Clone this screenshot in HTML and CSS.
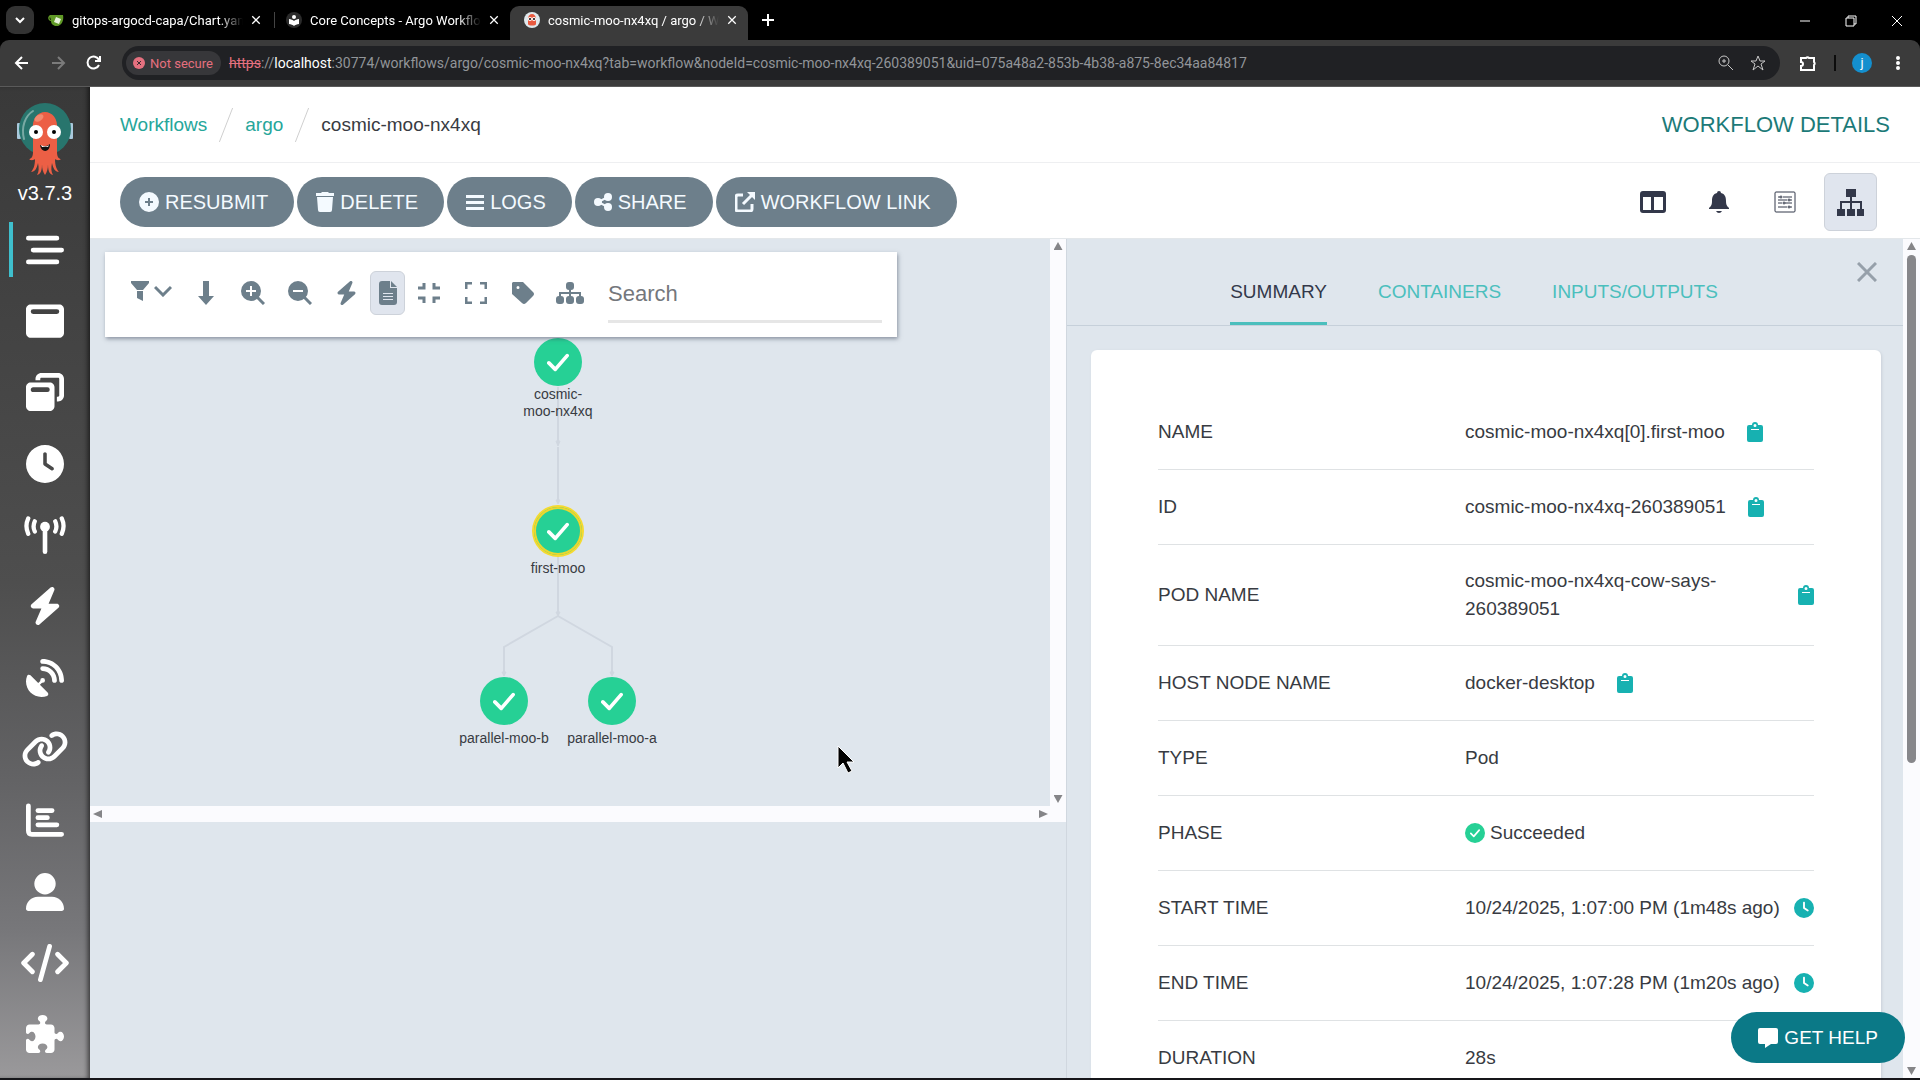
FILE: index.html
```html
<!DOCTYPE html>
<html lang="en">
<head>
  <meta charset="UTF-8" />
  <meta name="viewport" content="width=device-width, initial-scale=1.0" />
  <title>cosmic-moo-nx4xq / argo / Workflows</title>
  <link rel="stylesheet" href="styles.css">
</head>
<body>
  <!-- Shared icons -->
  <svg class="sprite" aria-hidden="true">
    <symbol id="i-x" viewBox="0 0 16 16"><path d="M2 2l12 12M14 2L2 14" fill="none" stroke="currentColor" stroke-width="2"/></symbol>
    <symbol id="i-check" viewBox="0 0 24 24"><path d="M2 13l7 7L22 5" fill="none" stroke="currentColor" stroke-width="4" stroke-linecap="round" stroke-linejoin="round"/></symbol>
    <symbol id="i-bolt" viewBox="0 0 448 512"><path d="M349.400 44.600c5.900-13.700 1.500-29.700-10.600-38.500s-28.600-8-39.900 1.800l-256 224c-10 8.800-13.600 22.900-8.900 35.300S50.700 288 64 288H175.500L98.600 467.400c-5.900 13.700-1.500 29.700 10.600 38.500s28.600 8 39.900-1.800l256-224c10-8.800 13.600-22.900 8.900-35.300s-16.600-20.700-30-20.700H272.500L349.400 44.600z"/></symbol>
    <symbol id="i-clock" viewBox="0 0 512 512"><path d="M256 0a256 256 0 1 1 0 512A256 256 0 1 1 256 0zM232 120V256c0 8 4 15.500 10.700 20l96 64c11 7.400 25.900 4.400 33.300-6.700s4.400-25.900-6.700-33.300L280 243.200V120c0-13.300-10.700-24-24-24s-24 10.700-24 24z"/></symbol>
    <symbol id="i-clip" viewBox="0 0 16 20"><path fill-rule="evenodd" d="M2 3h3a3 3 0 0 1 6 0h3a2 2 0 0 1 2 2v13a2 2 0 0 1-2 2H2a2 2 0 0 1-2-2V5a2 2 0 0 1 2-2zM8 2a1 1 0 0 0 0 3a1 1 0 0 0 0-3zM4 7v1h8V7z"/></symbol>
  </svg>

  <!-- Browser window -->
  <header class="browser">
    <div class="tabstrip">
      <button class="tab-search" aria-label="Search tabs"><svg width="10" height="10" viewBox="0 0 10 10"><path d="M1 3l4 4 4-4" fill="none" stroke="#fff" stroke-width="2"/></svg></button>
      <div class="tab">
        <svg class="favicon" viewBox="0 0 16 16"><path d="M2 3h13c1 5-1 10-5 11H7C4 13 3 11 3 9 0 9-1 5 2 3z" fill="#609926"/><path d="M2 5c-1 1 0 3 1 3z" fill="#000"/><path d="M8 5l5 2-2 5-5-2z" fill="#e8f3dc"/></svg>
        <span class="tab-title">gitops-argocd-capa/Chart.yaml</span>
        <button class="tab-close" aria-label="Close tab"><svg><use href="#i-x"/></svg></button>
      </div>
      <div class="tab divided">
        <svg class="favicon" viewBox="0 0 16 16"><circle cx="8" cy="8" r="8" fill="#2b2b2b"/><circle cx="8" cy="5" r="2" fill="#fff"/><path d="M3 7c2 0 4 1 5 2 1-1 3-2 5-2v5c-2 0-4 1-5 2-1-1-3-2-5-2z" fill="#fff"/></svg>
        <span class="tab-title">Core Concepts - Argo Workflow</span>
        <button class="tab-close" aria-label="Close tab"><svg><use href="#i-x"/></svg></button>
      </div>
      <div class="tab active">
        <svg class="favicon" viewBox="0 0 16 16"><circle cx="8" cy="8" r="8" fill="#dfe8ec"/><path d="M4 7a4 5 0 0 1 8 0v5c0 2-8 2-8 0z" fill="#e8593f"/><circle cx="6" cy="7" r="2" fill="#fff"/><circle cx="10" cy="7" r="2" fill="#fff"/><circle cx="6" cy="7" r="1" fill="#000"/><circle cx="10" cy="7" r="1" fill="#000"/></svg>
        <span class="tab-title">cosmic-moo-nx4xq / argo / Wo</span>
        <button class="tab-close" aria-label="Close tab"><svg><use href="#i-x"/></svg></button>
      </div>
      <button class="new-tab" aria-label="New tab"><svg width="12" height="12" viewBox="0 0 12 12"><path d="M6 0v12M0 6h12" stroke="#fff" stroke-width="2"/></svg></button>
      <div class="window-buttons">
        <button aria-label="Minimize"><svg viewBox="0 0 12 12"><path d="M1 6h10" stroke="#fff" fill="none"/></svg></button>
        <button aria-label="Restore"><svg viewBox="0 0 12 12"><path d="M1 3h8v8H1zM3 3V1h8v8H9" stroke="#fff" fill="none"/></svg></button>
        <button aria-label="Close"><svg viewBox="0 0 12 12"><path d="M1 1l10 10M11 1L1 11" stroke="#fff" fill="none"/></svg></button>
      </div>
    </div>

    <div class="address-row">
      <button aria-label="Back"><svg viewBox="0 0 16 16"><path d="M14 8H2M8 2L2 8l6 6"/></svg></button>
      <button class="dim" aria-label="Forward"><svg viewBox="0 0 16 16"><path d="M2 8h12M8 2l6 6-6 6"/></svg></button>
      <button aria-label="Reload"><svg viewBox="0 0 16 16"><path d="M13 10a6 6 0 1 1 0-5M14 1v5H9"/></svg></button>
      <div class="address">
        <span class="not-secure"><svg width="12" height="12" viewBox="0 0 12 12"><circle cx="6" cy="6" r="6" fill="#e5707f"/><path d="M4 4l4 4M8 4L4 8" stroke="#3a2a2d"/></svg>Not secure</span>
        <span class="url"><s>https</s>://<b>localhost</b>:30774/workflows/argo/cosmic-moo-nx4xq?tab=workflow&amp;nodeId=cosmic-moo-nx4xq-260389051&amp;uid=075a48a2-853b-4b38-a875-8ec34aa84817</span>
        <button aria-label="Zoom"><svg viewBox="0 0 16 16"><circle cx="6" cy="6" r="5"/><path d="M10 10l5 5M4 6h4M6 4v4"/></svg></button>
        <button aria-label="Bookmark"><svg viewBox="0 0 16 16"><path d="M8 1l2 5h5l-4 3 2 6-5-4-5 4 2-6-4-3h5z"/></svg></button>
      </div>
      <button aria-label="Extensions"><svg viewBox="0 0 16 16"><path d="M1 3h5a2 2 0 0 1 3 0h5v4a2 2 0 0 1 0 3v5H1v-4a2 2 0 0 0 0-4z" stroke-width="2"/></svg></button>
      <span class="bar"></span>
      <button class="avatar">j</button>
      <button class="dots" aria-label="Menu"><svg viewBox="0 0 16 16"><circle cx="8" cy="3" r="1"/><circle cx="8" cy="8" r="1"/><circle cx="8" cy="13" r="1"/></svg></button>
    </div>
  </header>

  <div class="app">
    <!-- Sidebar -->
    <aside class="sidebar">
      <svg class="logo" viewBox="0 0 56 74">
        <rect x="0" y="21" width="4" height="16" rx="1" fill="#a9c9dc"/><rect x="52" y="21" width="4" height="16" rx="1" fill="#a9c9dc"/>
        <circle cx="28" cy="27" r="26" fill="#28756d"/>
        <path d="M7 37C4 25 8 14 16 9" fill="none" stroke="#79aaa4" stroke-width="2" stroke-linecap="round"/>
        <path d="M16 28C13 4 43 4 40 28v22c0 5 2 7 4 7-2 2-5 1-6 0 0 7 2 11 4 13-4 0-6-4-7-9-1 5-1 9 1 12-4-1-5-5-5-11 0 5-1 8-3 11-2-3-3-6-3-11 0 6-1 10-5 11 2-3 2-7 1-12-1 5-3 9-7 9 2-2 4-6 4-13-1 1-4 2-6 0 2 0 4-2 4-7z" fill="#ec5f45"/>
        <ellipse cx="22" cy="16" rx="5" ry="3" fill="#f28a70" transform="rotate(-35 22 16)"/>
        <circle cx="19" cy="30" r="7" fill="#fff"/><circle cx="37" cy="30" r="7" fill="#fff"/>
        <circle cx="19" cy="30" r="2" fill="#000"/><circle cx="37" cy="30" r="2" fill="#000"/>
        <path d="M23 43q5 3 10-1c0 9-9 9-10 1z" fill="#111"/><path d="M24 43q5 3 8 0l-1 2h-6z" fill="#fff"/>
      </svg>
      <div class="version">v3.7.3</div>
      <nav>
        <a href="#" class="current" aria-label="Workflows"><svg viewBox="0 0 512 512"><path d="M32 96H416M96 256H480M32 416H416" stroke="#fff" stroke-width="64" stroke-linecap="round"/></svg></a>
        <a href="#" aria-label="Workflow Templates"><svg viewBox="0 0 512 512"><path d="M64 32C28.700 32 0 60.700 0 96V416c0 35.300 28.700 64 64 64H448c35.300 0 64-28.700 64-64V96c0-35.300-28.700-64-64-64H64zM96 96H416a32 32 0 0 1 0 64H96a32 32 0 0 1 0-64z" fill-rule="evenodd"/></svg></a>
        <a href="#" aria-label="Cluster Workflow Templates"><svg viewBox="0 0 512 512"><path fill-rule="evenodd" d="M432 64H208c-8.800 0-16 7.200-16 16V96H128V80c0-44.200 35.800-80 80-80H432c44.200 0 80 35.800 80 80V304c0 44.200-35.800 80-80 80H416V320h16c8.800 0 16-7.200 16-16V80c0-8.800-7.200-16-16-16zM0 192c0-35.300 28.700-64 64-64H320c35.300 0 64 28.700 64 64V448c0 35.300-28.700 64-64 64H64c-35.300 0-64-28.700-64-64V192zm64 32c0 17.700 14.300 32 32 32H288a32 32 0 0 0 0-64H96c-17.700 0-32 14.300-32 32z"/></svg></a>
        <a href="#" aria-label="Cron Workflows"><svg><use href="#i-clock"/></svg></a>
        <a href="#" aria-label="Event Flow"><svg class="wide" viewBox="0 0 576 512"><circle cx="288" cy="144" r="66"/><path d="M288 144V480" stroke="#fff" stroke-width="62" stroke-linecap="round"/><path d="M62 32Q14 136 62 240M150 72Q118 140 150 208M426 72Q458 140 426 208M514 32Q562 136 514 240" fill="none" stroke="#fff" stroke-width="58" stroke-linecap="round"/></svg></a>
        <a href="#" aria-label="Sensors"><svg><use href="#i-bolt"/></svg></a>
        <a href="#" aria-label="Event Sources"><svg viewBox="0 0 512 512"><path d="M192 32c0-17.700 14.300-32 32-32C383.100 0 512 128.900 512 288c0 17.700-14.300 32-32 32s-32-14.300-32-32C448 164.300 347.700 64 224 64c-17.700 0-32-14.300-32-32zM60.600 220.600L164.700 324.700l28.400-28.400c-.7-2.600-1.100-5.400-1.100-8.300a32 32 0 1 1 32 32c-2.900 0-5.600-.4-8.300-1.100l-28.400 28.400L291.400 451.400c14.500 14.500 11.800 38.800-7.300 46.300C260.500 506.900 234.900 512 208 512C93.100 512 0 418.900 0 304c0-26.900 5.100-52.500 14.400-76.100c7.500-19 31.800-21.800 46.300-7.300zM224 96c106 0 192 86 192 192c0 17.700-14.300 32-32 32s-32-14.300-32-32c0-70.700-57.300-128-128-128a32 32 0 0 1 0-64z"/></svg></a>
        <a href="#" aria-label="Links"><svg class="wide" viewBox="0 0 640 512"><path d="M579.800 267.700c56.500-56.500 56.500-148 0-204.500c-50-50-128.800-56.500-186.300-15.400l-1.600 1.100c-14.400 10.300-17.700 30.300-7.400 44.600s30.300 17.700 44.600 7.400l1.600-1.100c32.100-22.900 76-19.300 103.800 8.600c31.500 31.500 31.500 82.500 0 114L422.300 334.800c-31.500 31.500-82.500 31.500-114 0c-27.900-27.900-31.500-71.800-8.600-103.800l1.100-1.600c10.300-14.400 6.900-34.400-7.400-44.600s-34.400-6.900-44.600 7.400l-1.100 1.600C206.500 251.200 213 330 263 380c56.500 56.500 148 56.500 204.500 0L579.800 267.700zM60.200 244.300c-56.500 56.500-56.500 148 0 204.500c50 50 128.800 56.500 186.300 15.400l1.600-1.100c14.400-10.300 17.700-30.300 7.400-44.600s-30.300-17.700-44.600-7.400l-1.600 1.100c-32.100 22.900-76 19.300-103.800-8.600C74 372 74 321 105.500 289.500L217.700 177.200c31.500-31.500 82.500-31.500 114 0c27.900 27.900 31.500 71.800 8.600 103.900l-1.100 1.600c-10.300 14.400-6.900 34.400 7.400 44.600s34.400 6.900 44.600-7.400l1.100-1.600C433.500 260.800 427 182 377 132c-56.500-56.500-148-56.500-204.500 0L60.200 244.300z"/></svg></a>
        <a href="#" aria-label="Reports"><svg viewBox="0 0 512 512"><path d="M32 64V400q0 48 48 48H480M160 128H352M160 224H288M160 320H416" fill="none" stroke="#fff" stroke-width="64" stroke-linecap="round"/></svg></a>
        <a href="#" aria-label="User"><svg viewBox="0 0 512 512"><path d="M256 288A144 144 0 1 0 256 0a144 144 0 1 0 0 288zm-94.700 32C72.200 320 0 392.200 0 481.300c0 17 13.800 30.700 30.700 30.700H481.300c17 0 30.700-13.800 30.700-30.700C512 392.200 439.800 320 350.700 320H161.300z"/></svg></a>
        <a href="#" aria-label="API Docs"><svg class="wide" viewBox="0 0 640 512"><path d="M382 32L258 480M150 138L32 256l118 118M490 138l118 118-118 118" fill="none" stroke="#fff" stroke-width="64" stroke-linecap="round" stroke-linejoin="round"/></svg></a>
        <a href="#" aria-label="Plugins"><svg viewBox="0 0 512 512"><path d="M192 104.800c0-9.200-5.800-17.300-13.200-22.800C167.200 73.300 160 61.300 160 48c0-26.500 28.700-48 64-48s64 21.500 64 48c0 13.300-7.200 25.300-18.800 34c-7.400 5.500-13.200 13.600-13.200 22.800c0 12.800 10.400 23.200 23.200 23.200H336c26.500 0 48 21.500 48 48v56.800c0 12.800 10.400 23.200 23.200 23.200c9.200 0 17.300-5.800 22.800-13.200c8.700-11.600 20.700-18.800 34-18.800c26.500 0 48 28.700 48 64s-21.500 64-48 64c-13.300 0-25.300-7.200-34-18.800c-5.500-7.400-13.600-13.200-22.800-13.200c-12.800 0-23.200 10.400-23.200 23.200V464c0 26.500-21.500 48-48 48H279.200c-12.800 0-23.200-10.400-23.200-23.200c0-9.200 5.800-17.300 13.200-22.800c11.600-8.700 18.800-20.700 18.800-34c0-26.500-28.700-48-64-48s-64 21.500-64 48c0 13.300 7.200 25.300 18.800 34c7.400 5.500 13.200 13.600 13.200 22.800c0 12.800-10.400 23.200-23.200 23.200H48c-26.500 0-48-21.500-48-48V343.200C0 330.400 10.400 320 23.200 320c9.200 0 17.300 5.800 22.800 13.200C54.700 344.800 66.700 352 80 352c26.500 0 48-28.700 48-64s-21.500-64-48-64c-13.300 0-25.300 7.200-34 18.800C40.500 250.200 32.400 256 23.200 256C10.400 256 0 245.600 0 232.800V176c0-26.500 21.500-48 48-48H168.800c12.800 0 23.200-10.400 23.200-23.200z"/></svg></a>
      </nav>
    </aside>

    <main>
      <div class="topbar">
        <div class="breadcrumbs">
          <a href="#">Workflows</a>
          <svg class="slash" viewBox="0 0 16 36"><path d="M15 0L1 36"/></svg>
          <a href="#">argo</a>
          <svg class="slash" viewBox="0 0 16 36"><path d="M15 0L1 36"/></svg>
          <span>cosmic-moo-nx4xq</span>
        </div>
        <h1>WORKFLOW DETAILS</h1>
      </div>

      <div class="actions">
        <button class="pill"><svg viewBox="0 0 20 20"><path fill-rule="evenodd" d="M10 0a10 10 0 0 1 0 20a10 10 0 0 1 0-20zM9 6v3H6v2h3v3h2v-3h3V9h-3V6z"/></svg>RESUBMIT</button>
        <button class="pill"><svg class="slim" viewBox="0 0 18 20"><path d="M6 0h6l1 1h5v3H0V1h5zM1 5h16l-1 13q0 2-2 2H4q-2 0-2-2z"/></svg>DELETE</button>
        <button class="pill"><svg class="slim" viewBox="0 0 18 20"><path d="M0 3h18v3H0zM0 9h18v3H0zM0 15h18v3H0z"/></svg>LOGS</button>
        <button class="pill"><svg class="slim" viewBox="0 0 18 20"><circle cx="4" cy="10" r="4"/><circle cx="14" cy="5" r="4"/><circle cx="14" cy="15" r="4"/><path d="M14 5L4 10l10 5" fill="none" stroke="currentColor" stroke-width="2"/></svg>SHARE</button>
        <button class="pill"><svg viewBox="0 0 20 20"><path d="M8 3H3q-2 0-2 2v12q0 2 2 2h12q2 0 2-2v-5M8 12L18 2" fill="none" stroke="currentColor" stroke-width="3"/><path d="M12 0h8v8z"/></svg>WORKFLOW LINK</button>
        <div class="views">
          <button aria-label="Columns"><svg width="26" height="22" viewBox="0 0 26 22"><path fill-rule="evenodd" d="M3 0h20q3 0 3 3v16q0 3-3 3H3q-3 0-3-3V3q0-3 3-3zM3 6v13h8V6zM14 6v13h9V6z"/></svg></button>
          <button aria-label="Notifications"><svg width="20" height="22" viewBox="0 0 20 22"><path d="M10 0q2 0 2 2c4 1 5 4 5 8 0 4 1 5 3 7v1H0v-1c2-2 3-3 3-7 0-4 1-7 5-8q0-2 2-2zM7 20h6q-1 2-3 2t-3-2z"/></svg></button>
          <button aria-label="Parameters"><svg class="outline" width="22" height="22" viewBox="0 0 22 22"><rect x="1" y="1" width="20" height="20" rx="1"/><path d="M4 6h2M9 6h9M4 9h9M16 9h2M4 12h4M11 12h7M4 16h9M16 16h2"/><circle cx="7" cy="6" r="1"/><circle cx="15" cy="9" r="1"/><circle cx="10" cy="12" r="1"/><circle cx="15" cy="16" r="1"/></svg></button>
          <button class="selected" aria-label="Graph"><svg width="27" height="27" viewBox="0 0 27 27"><path d="M9 0h10v8H9zM0 20h8v7H0zM10 20h8v7h-8zM20 20h7v7h-7z"/><path d="M14 8v12M4 20v-7h20v7" fill="none" stroke="currentColor" stroke-width="2"/></svg></button>
        </div>
      </div>

      <div class="workspace">
        <section class="graph-pane">
          <div class="graph">
            <div class="canvas">
              <svg class="edges" width="960" height="567" viewBox="0 0 960 567">
                <path d="M468 148V206M468 208V264M468 316V376M468 377L414 408V436M468 377L522 408V436"/>
                <path class="heads" d="M466 202h4l-2 5zM466 261h4l-2 4zM466 373h4l-2 4zM412 433h4l-2 4zM520 433h4l-2 4z"/>
              </svg>
              <div class="node root"><span class="dot"><svg><use href="#i-check"/></svg></span><span class="label">cosmic-<br>moo-nx4xq</span></div>
              <div class="node first"><span class="dot picked"><svg><use href="#i-check"/></svg></span><span class="label">first-moo</span></div>
              <div class="node left"><span class="dot"><svg><use href="#i-check"/></svg></span><span class="label">parallel-moo-b</span></div>
              <div class="node right"><span class="dot"><svg><use href="#i-check"/></svg></span><span class="label">parallel-moo-a</span></div>

              <div class="toolbar">
                <button class="filter" aria-label="Filter"><svg width="18" height="20" viewBox="0 0 18 20"><path d="M0 0h18v2l-6 7H6L0 2zM6 10h6v10l-6-3z"/></svg><svg width="18" height="12" viewBox="0 0 18 12"><path d="M1 2l8 8 8-8" fill="none" stroke="currentColor" stroke-width="3"/></svg></button>
                <button aria-label="Layout direction"><svg width="16" height="24" viewBox="0 0 16 24"><path d="M5 0h6v15h5l-8 9-8-9h5z"/></svg></button>
                <button aria-label="Zoom in"><svg width="24" height="24" viewBox="0 0 24 24"><path d="M16 16l7 7" stroke="currentColor" stroke-width="3"/><path fill-rule="evenodd" d="M10 0a10 10 0 0 1 0 20a10 10 0 0 1 0-20zM9 5v4H5v2h4v4h2v-4h4V9h-4V5z"/></svg></button>
                <button aria-label="Zoom out"><svg width="24" height="24" viewBox="0 0 24 24"><path d="M16 16l7 7" stroke="currentColor" stroke-width="3"/><path fill-rule="evenodd" d="M10 0a10 10 0 0 1 0 20a10 10 0 0 1 0-20zM5 9v2h10V9z"/></svg></button>
                <button aria-label="Expand nodes"><svg width="21" height="24"><use href="#i-bolt"/></svg></button>
                <button class="selected" aria-label="Show artifacts"><svg width="18" height="24" viewBox="0 0 18 24"><path fill-rule="evenodd" d="M3 0h8v7h7v14q0 3-3 3H3q-3 0-3-3V3q0-3 3-3zM4 12v1h10v-1zM4 15v1h10v-1zM4 18v1h10v-1z"/><path d="M12 0l6 6h-6z"/></svg></button>
                <button aria-label="Collapse"><svg width="22" height="22" viewBox="0 0 22 22"><path d="M0 6h6V1M16 1v5h6M0 16h6v5M16 21v-5h6" fill="none" stroke="currentColor" stroke-width="3"/></svg></button>
                <button aria-label="Full graph"><svg width="22" height="22" viewBox="0 0 22 22"><path d="M1 7V1h6M15 1h6v6M1 15v6h6M15 21h6v-6" fill="none" stroke="currentColor" stroke-width="3"/></svg></button>
                <button aria-label="Labels"><svg width="22" height="22" viewBox="0 0 22 22"><path fill-rule="evenodd" d="M1 0h10l10 10q2 2 0 4l-7 7q-2 2-4 0L0 12V1zM6 4a1 1 0 0 0 0 3a1 1 0 0 0 0-3z"/></svg></button>
                <button aria-label="Node types"><svg width="28" height="22" viewBox="0 0 28 22"><rect x="10" y="0" width="8" height="8" rx="3"/><rect x="0" y="14" width="8" height="8" rx="3"/><rect x="10" y="14" width="8" height="8" rx="3"/><rect x="20" y="14" width="8" height="8" rx="3"/><path d="M14 8v6M4 14v-3h20v3" fill="none" stroke="currentColor" stroke-width="2"/></svg></button>
                <input type="text" placeholder="Search" aria-label="Search" />
              </div>
            </div>
            <div class="vbar"><i class="up"></i><i class="down"></i></div>
            <div class="hbar"><i class="prev"></i><i class="next"></i></div>
          </div>
        </section>

        <section class="details">
          <div class="details-body">
            <div class="tabs">
              <button class="on">SUMMARY</button>
              <button>CONTAINERS</button>
              <button>INPUTS/OUTPUTS</button>
              <button class="close" aria-label="Close"><svg width="20" height="20" viewBox="0 0 20 20"><path d="M1 1l18 18M19 1L1 19" stroke="currentColor" stroke-width="3"/></svg></button>
            </div>
            <div class="card">
              <table>
                <tr><th scope="row">NAME</th><td><div class="value">cosmic-moo-nx4xq[0].first-moo<button class="copy" aria-label="Copy"><svg><use href="#i-clip"/></svg></button></div></td></tr>
                <tr><th scope="row">ID</th><td><div class="value">cosmic-moo-nx4xq-260389051<button class="copy" aria-label="Copy"><svg><use href="#i-clip"/></svg></button></div></td></tr>
                <tr><th scope="row">POD NAME</th><td><div class="value spread"><span>cosmic-moo-nx4xq-cow-says-<br>260389051</span><button class="copy" aria-label="Copy"><svg><use href="#i-clip"/></svg></button></div></td></tr>
                <tr><th scope="row">HOST NODE NAME</th><td><div class="value">docker-desktop<button class="copy" aria-label="Copy"><svg><use href="#i-clip"/></svg></button></div></td></tr>
                <tr><th scope="row">TYPE</th><td>Pod</td></tr>
                <tr><th scope="row">PHASE</th><td><div class="value phase"><span class="ok"><svg><use href="#i-check"/></svg></span>Succeeded</div></td></tr>
                <tr><th scope="row">START TIME</th><td><div class="value spread"><span>10/24/2025, 1:07:00 PM (1m48s ago)</span><svg class="time"><use href="#i-clock"/></svg></div></td></tr>
                <tr><th scope="row">END TIME</th><td><div class="value spread"><span>10/24/2025, 1:07:28 PM (1m20s ago)</span><svg class="time"><use href="#i-clock"/></svg></div></td></tr>
                <tr><th scope="row">DURATION</th><td>28s</td></tr>
              </table>
            </div>
          </div>
          <div class="vbar page"><i class="up"></i><span class="thumb"></span><i class="down"></i></div>
        </section>
      </div>
    </main>
  </div>

  <button class="help"><svg width="20" height="20" viewBox="0 0 20 20"><path d="M2 0h16q2 0 2 2v12q0 2-2 2h-5l-6 4v-4H2q-2 0-2-2V2q0-2 2-2z"/></svg>GET HELP</button>
  <svg class="cursor" viewBox="0 0 18 29"><path d="M1 1v22l5-5 5 10 4-2-5-9h7z" fill="#000" stroke="#fff"/></svg>
</body>
</html>
```
FILE: styles.css
```css
* { box-sizing: border-box; }
body {
  margin: 0;
  height: 100vh;
  display: flex;
  flex-direction: column;
  overflow: hidden;
  background: #fff;
  color: #383b42;
  font-family: "Liberation Sans", Arial, sans-serif;
  font-size: 19px;
}
button {
  border: none;
  background: none;
  padding: 0;
  margin: 0;
  color: inherit;
  font: inherit;
  cursor: pointer;
}
button svg, a svg { display: block; }
svg { fill: currentColor; flex-shrink: 0; }
svg.outline { fill: none; stroke: currentColor; }
a { text-decoration: none; }
.sprite { display: none; }

/* Browser */
.browser {
  flex-shrink: 0;
  background: #000;
  color: #fff;
  font-family: Roboto, "Open Sans", sans-serif;
  font-size: 13px;
}
.tabstrip {
  display: flex;
  height: 40px;
  padding: 6px 0 0 6px;
}
.tab-search {
  width: 28px;
  height: 28px;
  border-radius: 9px;
  background: #333;
  display: flex;
  align-items: center;
  justify-content: center;
}
.tab {
  position: relative;
  width: 238px;
  display: flex;
  align-items: center;
  padding: 0 11px 6px 14px;
}
.tab.divided::before {
  content: "";
  position: absolute;
  left: 2px;
  top: 6px;
  width: 1px;
  height: 16px;
  background: #444;
}
.tab.active {
  background: #3b3b3b;
  border-radius: 9px 9px 0 0;
}
.favicon { width: 16px; height: 16px; margin-right: 8px; }
.tab-title {
  flex: 1;
  min-width: 0;
  white-space: nowrap;
  -webkit-mask-image: linear-gradient(to right, #000 86%, transparent);
  mask-image: linear-gradient(to right, #000 86%, transparent);
}
.tab-close { margin-left: 8px; }
.tab-close svg { width: 10px; height: 10px; }
.new-tab { width: 34px; padding: 0 0 6px 14px; }
.window-buttons {
  display: flex;
  margin-left: auto;
}
.window-buttons button { width: 46px; padding-bottom: 4px; }
.window-buttons svg { width: 12px; height: 12px; margin: 0 auto; }
.address-row {
  display: flex;
  align-items: center;
  height: 47px;
  padding: 0 4px;
  background: #3b3b3b;
  border-bottom: 1px solid #5a5a5a;
  border-radius: 9px 9px 0 0;
}
.address-row button { width: 36px; height: 32px; }
.address-row button svg {
  width: 16px;
  height: 16px;
  margin: 0 auto;
  fill: none;
  stroke: currentColor;
  stroke-width: 2;
}
.address-row .dim { color: #7b7b7b; }
.address {
  flex: 1;
  display: flex;
  align-items: center;
  height: 34px;
  margin: 0 10px;
  padding: 0 6px 0 4px;
  border-radius: 17px;
  background: #202124;
}
.address button { width: 32px; color: #c7c7c7; }
.address button svg { stroke-width: 1; }
.not-secure {
  display: flex;
  align-items: center;
  gap: 5px;
  height: 24px;
  padding: 0 8px 0 7px;
  border-radius: 12px;
  background: #37373a;
  color: #e5707f;
  white-space: nowrap;
}
.url {
  flex: 1;
  margin-left: 8px;
  color: #929599;
  font-size: 14px;
  white-space: nowrap;
}
.url s { color: #e5707f; }
.url b { color: #fff; font-weight: normal; }
.bar { width: 2px; height: 16px; margin: 0 8px; background: #0c0c0c; }
.address-row .avatar {
  width: 20px;
  height: 20px;
  margin: 0 8px;
  border-radius: 50%;
  background: #148fce;
  line-height: 20px;
}
.address-row .dots svg { fill: #fff; }

/* Shell */
.app {
  flex: 1;
  min-height: 0;
  display: flex;
  border-bottom: 2px solid #16161a;
}
.sidebar {
  width: 90px;
  display: flex;
  flex-direction: column;
  align-items: center;
  padding: 15px 0 8px;
  background: linear-gradient(#393939, #4e4e4e 50%, #636365 70%, #77777a 85%, #9a999b);
  box-shadow: inset -4px 0 5px -2px rgba(0,0,0,0.6);
  color: #fff;
}
.logo { width: 56px; height: 74px; }
.version {
  margin: 5px 0 9px;
  font-size: 20px;
  line-height: 24px;
}
nav {
  flex: 1;
  width: 100%;
  display: flex;
  flex-direction: column;
}
nav a {
  position: relative;
  flex: 1;
  display: flex;
  align-items: center;
  justify-content: center;
  color: #fff;
}
nav svg { width: 38px; height: 38px; }
nav svg.wide { width: 48px; }
nav a.current::before {
  content: "";
  position: absolute;
  left: 9px;
  top: 8px;
  bottom: 8px;
  width: 4px;
  background: #3fbfcd;
}
main {
  flex: 1;
  min-width: 0;
  display: flex;
  flex-direction: column;
}
.topbar {
  display: flex;
  justify-content: space-between;
  align-items: center;
  height: 76px;
  padding: 0 30px;
  border-bottom: 1px solid #eeeff1;
}
.breadcrumbs {
  display: flex;
  align-items: center;
  gap: 11px;
}
.breadcrumbs a { color: #26a69a; }
.slash { width: 16px; height: 34px; fill: none; stroke: #ccc; }
h1 {
  margin: 0;
  font-size: 22px;
  font-weight: normal;
  color: #1c7a78;
}
.actions {
  display: flex;
  align-items: center;
  gap: 3px;
  height: 76px;
  flex-shrink: 0;
  padding: 3px 43px 0 30px;
  border-bottom: 1px solid #e3e7ea;
}
.pill {
  display: flex;
  align-items: center;
  gap: 6px;
  height: 50px;
  padding: 0 26px 0 19px;
  border-radius: 25px;
  background: #6d7f8b;
  color: #f4faff;
  font-size: 20px;
  white-space: nowrap;
}
.pill svg { width: 20px; height: 20px; }
.pill svg.slim { width: 18px; }
.views {
  display: flex;
  align-items: center;
  gap: 13px;
  margin-left: auto;
  color: #33384a;
}
.views button {
  display: flex;
  align-items: center;
  justify-content: center;
  width: 53px;
  height: 58px;
}
.selected {
  background: #e0e5ee;
  border: 1px solid #cdd2da;
  border-radius: 6px;
}

/* Workspace */
.workspace {
  flex: 1;
  min-height: 0;
  display: grid;
  grid-template-columns: 8fr 7fr;
  grid-template-rows: 100%;
  background: #dfe6ed;
}
.graph-pane { min-width: 0; }
.graph {
  display: grid;
  grid-template-columns: 1fr 16px;
}
.canvas {
  position: relative;
  height: 567px;
  overflow: hidden;
}
.vbar {
  display: flex;
  flex-direction: column;
  align-items: center;
  padding: 3px 0;
  background: #fbfbfe;
}
.hbar {
  grid-column: 1 / 3;
  display: flex;
  align-items: center;
  height: 16px;
  padding: 0 18px 0 3px;
  background: #fbfbfe;
}
.vbar i, .hbar i {
  width: 9px;
  height: 8px;
  background: #858588;
}
.up { clip-path: polygon(50% 0, 100% 100%, 0 100%); }
.down { margin-top: auto; clip-path: polygon(0 0, 100% 0, 50% 100%); }
.prev { clip-path: polygon(0 50%, 100% 0, 100% 100%); }
.next { margin-left: auto; clip-path: polygon(0 0, 100% 50%, 0 100%); }
.toolbar {
  position: absolute;
  left: 15px;
  top: 13px;
  width: 792px;
  height: 85px;
  display: flex;
  align-items: center;
  gap: 12px;
  padding: 0 15px 0 26px;
  background: #fff;
  box-shadow: 1px 2px 4px rgba(60,70,90,0.5);
  color: #6d7f8b;
}
.toolbar button {
  display: flex;
  align-items: center;
  justify-content: center;
  width: 35px;
  height: 44px;
  margin-bottom: 4px;
  flex-shrink: 0;
}
.toolbar .filter {
  width: 41px;
  gap: 5px;
  margin: 0 4px 8px 0;
}
.toolbar .selected { margin-left: -6px; margin-right: -6px; }
.toolbar input {
  flex: 1;
  min-width: 0;
  height: 56px;
  margin-left: 9px;
  padding: 2px 0 0;
  border: none;
  border-bottom: 3px solid #e6e6e6;
  outline: none;
  background: none;
  font: inherit;
  font-size: 22px;
}
.toolbar input::placeholder { color: #74777c; }
.edges {
  position: absolute;
  left: 0;
  top: 0;
  fill: none;
  stroke: #d0d7e0;
  stroke-width: 2;
}
.edges .heads { stroke-width: 1; }
.node {
  position: absolute;
  width: 100px;
  margin: -24px 0 0 -50px;
  display: flex;
  flex-direction: column;
  align-items: center;
  font-size: 14px;
  line-height: 17px;
  text-align: center;
}
.root { left: 468px; top: 123px; }
.first { left: 468px; top: 292px; }
.left { left: 414px; top: 462px; }
.right { left: 522px; top: 462px; }
.dot {
  display: flex;
  align-items: center;
  justify-content: center;
  width: 48px;
  height: 48px;
  border-radius: 50%;
  background: #26d095;
  color: #fff;
}
.dot svg { width: 22px; height: 22px; }
.picked { box-shadow: inset 0 0 0 2px #ecd62e, 0 0 0 2px #f5da30; }
.label {
  display: flex;
  align-items: center;
  min-height: 26px;
  white-space: nowrap;
}

/* Node details */
.details {
  display: flex;
  min-width: 0;
  border-left: 1px solid #d0d7df;
}
.details-body {
  flex: 1;
  min-width: 0;
  overflow: hidden;
}
.tabs {
  position: relative;
  display: flex;
  justify-content: center;
  gap: 51px;
  height: 87px;
  padding-top: 22px;
  padding-right: 22px;
  border-bottom: 1px solid #c6d0da;
  color: #4bbfbd;
}
.tabs button {
  border-bottom: 3px solid transparent;
}
.tabs .on {
  color: #33384a;
  border-bottom-color: #4bbfbd;
}
.tabs .close {
  position: absolute;
  right: 26px;
  top: 23px;
  border: none;
  color: #96a0aa;
}
.card {
  margin: 24px 22px 0 24px;
  padding: 45px 67px 40px;
  border-radius: 6px;
  background: #fff;
  box-shadow: 1px 1px 3px #c9d0d8;
}
table {
  width: 100%;
  border-spacing: 0;
  table-layout: fixed;
  line-height: 28px;
}
th, td {
  height: 75px;
  padding: 22px 0;
  border-bottom: 1px solid #dfe2e4;
  text-align: left;
  font-weight: normal;
}
th { width: 307px; }
.value {
  display: flex;
  align-items: center;
  white-space: nowrap;
}
.spread { justify-content: space-between; }
.copy { margin-left: 22px; color: #17b1b1; }
.copy svg { width: 16px; height: 20px; }
.time { width: 20px; height: 20px; color: #17b1b1; }
.phase { gap: 5px; }
.ok {
  display: flex;
  align-items: center;
  justify-content: center;
  width: 20px;
  height: 20px;
  border-radius: 50%;
  background: #26d095;
  color: #fff;
}
.ok svg { width: 10px; height: 10px; }
.page { width: 17px; }
.thumb {
  width: 9px;
  height: 61%;
  margin-top: 5px;
  border-radius: 5px;
  background: #87878b;
}
.help {
  position: fixed;
  right: 15px;
  bottom: 17px;
  display: flex;
  align-items: center;
  gap: 6px;
  height: 51px;
  padding: 0 27px;
  border-radius: 26px;
  background: #0b7987;
  color: #fff;
}
.cursor {
  position: fixed;
  left: 837px;
  top: 745px;
  width: 18px;
  height: 29px;
}
```
